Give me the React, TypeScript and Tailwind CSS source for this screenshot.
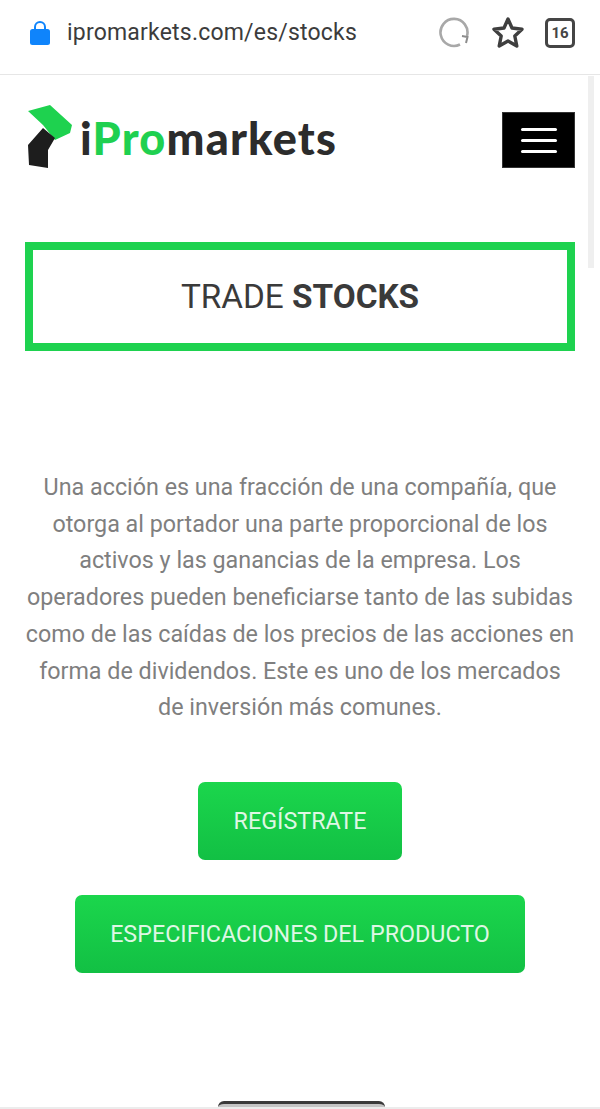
const roboto = { fontFamily: "Roboto, sans-serif" }

function LogoMark() {
  return (
    <svg width="46" height="65" viewBox="0 0 46 65" className="shrink-0">
      <path d="M1 7 L23 1 L45 21 L43 29 L28 36 L16 21 Z" fill="#1ed24f" />
      <path d="M16 24 L28 34 L21 46 L21 64 L2 61 L1 41 Z" fill="#1d1d1d" />
    </svg>
  )
}

export default function App() {
  return (
    <div className="relative h-[1109px] w-[600px] overflow-hidden bg-white" style={roboto}>
      {/* Browser bar */}
      <div className="flex h-[75px] items-center border-b border-[#e6e6e6] pb-[8px] pl-[29px] pr-[25px]">
        <svg width="22" height="26" viewBox="0 0 22 26" className="mr-[16px] shrink-0">
          <path d="M6 11 V7 a5 5 0 0 1 10 0 V11" fill="none" stroke="#0f84fb" strokeWidth="2" />
          <rect x="1" y="9" width="20" height="16" rx="2.5" fill="#0f84fb" />
        </svg>
        <span className="text-[23px] tracking-[0.2px] text-[#3c3c3c]">ipromarkets.com/es/stocks</span>
        <div className="ml-auto flex items-center">
          <svg width="32" height="32" viewBox="0 0 32 32" className="mr-[21px]">
            <path d="M22 27.5 A13.5 13.5 0 1 1 29 19" fill="none" stroke="#a8a8a8" strokeWidth="2.6" />
            <path d="M24 19 L29.5 20 L28 26" fill="none" stroke="#8c8c8c" strokeWidth="2" />
          </svg>
          <svg width="34" height="34" viewBox="0 0 34 34" className="mr-[20px]">
            <path
              d="M17 3 L21 12 L31 13.2 L23.8 20 L25.8 30 L17 25 L8.2 30 L10.2 20 L3 13.2 L13 12 Z"
              fill="none"
              stroke="#3f3f3f"
              strokeWidth="3.4"
              strokeLinejoin="round"
            />
          </svg>
          <div className="flex h-[30px] w-[30px] items-center justify-center rounded-[5px] border-[3px] border-[#454545] text-[15px] font-bold text-[#454545]">
            16
          </div>
        </div>
      </div>

      {/* Page scrollbar */}
      <div className="absolute right-[6px] top-[76px] h-[192px] w-[6px] bg-[#efefef]" />

      {/* Site header */}
      <div className="flex items-end justify-between pl-[27px] pr-[25px] pt-[29px]">
        <div className="flex items-center">
          <LogoMark />
          <span
            className="ml-[7px] mt-[3px] text-[45px] font-black leading-none tracking-[1.2px] text-[#2c2c2c]"
            style={{ fontFamily: "Lato, sans-serif" }}
          >
            i<span className="text-[#1fd050]">Pro</span>markets
          </span>
        </div>
        <div className="mb-[1px] flex h-[56px] w-[73px] flex-col items-center justify-center gap-[8px] border border-[#333333] bg-black">
          <span className="h-[3px] w-[36px] rounded-sm bg-white" />
          <span className="h-[3px] w-[36px] rounded-sm bg-white" />
          <span className="h-[3px] w-[36px] rounded-sm bg-white" />
        </div>
      </div>

      {/* Title box */}
      <div className="mx-[25px] mt-[73px] flex h-[109px] items-center justify-center border-[8px] border-[#1ed24f] text-[33.3px] text-[#3a3a3a]">
        <span>
          TRADE <span className="font-bold">STOCKS</span>
        </span>
      </div>

      {/* Description */}
      <p className="mx-[25px] mt-[118px] text-center text-[23.3px] leading-[36.7px] text-[#7f7f7f]">
        Una acción es una fracción de una compañía, que otorga al portador una parte proporcional de los activos y las
        ganancias de la empresa. Los operadores pueden beneficiarse tanto de las subidas como de las caídas de los
        precios de las acciones en forma de dividendos. Este es uno de los mercados de inversión más comunes.
      </p>

      {/* Buttons */}
      <div className="mt-[56px] flex flex-col items-center gap-[35px]">
        <button className="flex h-[78px] w-[204px] items-center justify-center rounded-[7px] bg-gradient-to-b from-[#1bd64c] to-[#12c044] pt-[1px] text-[23.3px] text-[#dff7e5]">
          REGÍSTRATE
        </button>
        <button className="flex h-[78px] w-[450px] items-center justify-center rounded-[7px] bg-gradient-to-b from-[#1bd64c] to-[#12c044] pt-[1px] text-[23.3px] text-[#dff7e5]">
          ESPECIFICACIONES DEL PRODUCTO
        </button>
      </div>

      {/* Bottom edge */}
      <div className="absolute bottom-0 left-0 w-full border-t-2 border-[#ececec]" />
      <div className="absolute bottom-[2px] left-[218px] h-[6px] w-[167px] rounded-t-[10px] border-t-[3px] border-[#3a3a3a] bg-[#c4c4c4]" />
    </div>
  )
}
